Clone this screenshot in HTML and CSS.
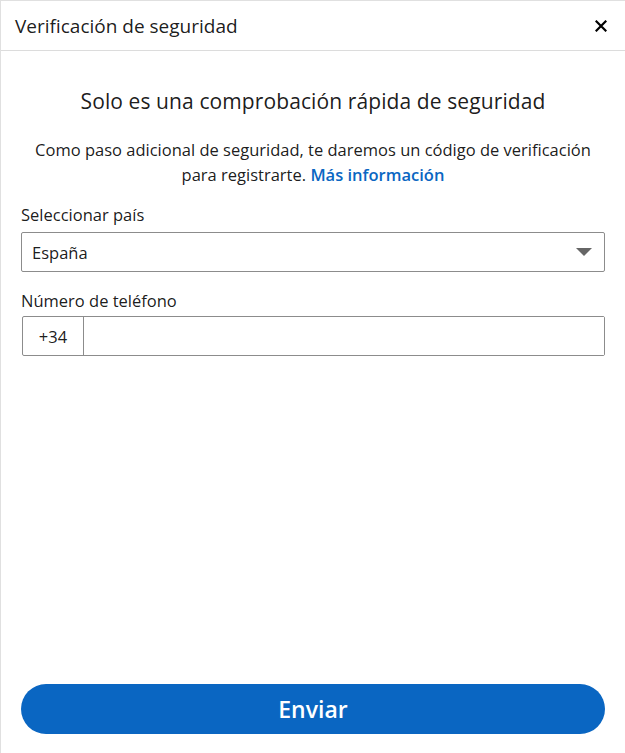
FILE: index.html
```html
<!DOCTYPE html>
<html>
<head>
  <title>Verificación de seguridad</title>
  <link rel="stylesheet" href="styles.css">
</head>
<body>
  <div class="modal">
    <div class="modal-header">
      <h2>Verificación de seguridad</h2>
      <button class="close-btn" aria-label="Cerrar">
        <svg width="12" height="12" viewBox="0 0 12 12"><path d="M1.5 1.5L10.5 10.5M10.5 1.5L1.5 10.5" stroke="#000" stroke-width="2.2" stroke-linecap="square"/></svg>
      </button>
    </div>
    <div class="modal-body">
      <h1>Solo es una comprobación rápida de seguridad</h1>
      <p class="intro">Como paso adicional de seguridad, te daremos un código de verificación para registrarte. <a href="#">Más información</a></p>

      <label for="country">Seleccionar país</label>
      <div class="select-wrap">
        <select id="country" name="country">
          <option value="es">España</option>
        </select>
        <span class="arrow"></span>
      </div>

      <label for="phone" class="phone-label">Número de teléfono</label>
      <div class="phone-field">
        <span class="prefix">+34</span>
        <input type="tel" id="phone" name="phone">
      </div>
    </div>
    <div class="modal-footer">
      <button class="submit-btn">Enviar</button>
    </div>
  </div>
</body>
</html>
```

FILE: styles.css
```css
html, body {
  margin: 0;
  height: 100%;
}

body {
  font-family: "Open Sans", "Liberation Sans", sans-serif;
  color: rgba(0, 0, 0, 0.9);
  background-color: #fff;
}

.modal {
  height: 100%;
  box-sizing: border-box;
  border-top: 1px solid #e0e0e0;
  border-left: 1px solid #e0e0e0;
  display: flex;
  flex-direction: column;
}

.modal-header {
  height: 49px;
  display: flex;
  align-items: center;
  justify-content: space-between;
  padding: 0 17px 0 14px;
  border-bottom: 1px solid #dcdcdc;
}

.modal-header h2 {
  margin: 0;
  font-size: 19px;
  font-weight: 400;
}

.close-btn {
  background: none;
  border: none;
  padding: 0;
  width: 14px;
  height: 14px;
  display: flex;
  align-items: center;
  justify-content: center;
}

.modal-body {
  flex: 1;
  padding: 36px 20px 0 20px;
}

.modal-body h1 {
  margin: 0;
  text-align: center;
  font-size: 21px;
  font-weight: 400;
  line-height: 28px;
  letter-spacing: 0.1px;
}

.intro {
  margin: 22px 8px 16px;
  text-align: center;
  font-size: 16.5px;
  line-height: 25px;
}

.intro a {
  color: #0a66c2;
  font-weight: 600;
  text-decoration: none;
}

label {
  display: block;
  font-size: 16.5px;
  line-height: 24px;
  margin-bottom: 5px;
}

.phone-label {
  margin-bottom: 3px;
}

.select-wrap {
  position: relative;
  margin-bottom: 17px;
}

.select-wrap select {
  width: 100%;
  height: 40px;
  box-sizing: border-box;
  appearance: none;
  -webkit-appearance: none;
  border: 1px solid #8c8c8c;
  border-radius: 2px;
  padding: 0 10px;
  font-family: inherit;
  font-size: 16.5px;
  color: rgba(0, 0, 0, 0.9);
  background: #fff;
}

.arrow {
  position: absolute;
  right: 13px;
  top: 16px;
  width: 0;
  height: 0;
  border-left: 8px solid transparent;
  border-right: 8px solid transparent;
  border-top: 8px solid #666;
  pointer-events: none;
}

.phone-field {
  display: flex;
  height: 40px;
  box-sizing: border-box;
  border: 1px solid #8c8c8c;
  border-radius: 2px;
  margin-left: 1px;
}

.prefix {
  width: 60px;
  display: flex;
  align-items: center;
  justify-content: center;
  border-right: 1px solid #8c8c8c;
  font-size: 16.5px;
}

.phone-field input {
  flex: 1;
  border: none;
  outline: none;
  padding: 0 10px;
  font-family: inherit;
  font-size: 16.5px;
}

.modal-footer {
  padding: 0 20px 19px 20px;
}

.submit-btn {
  width: 100%;
  height: 50px;
  border: none;
  border-radius: 25px;
  background-color: #0a66c2;
  color: #fff;
  font-family: inherit;
  font-size: 23px;
  font-weight: 600;
  cursor: pointer;
}
```
